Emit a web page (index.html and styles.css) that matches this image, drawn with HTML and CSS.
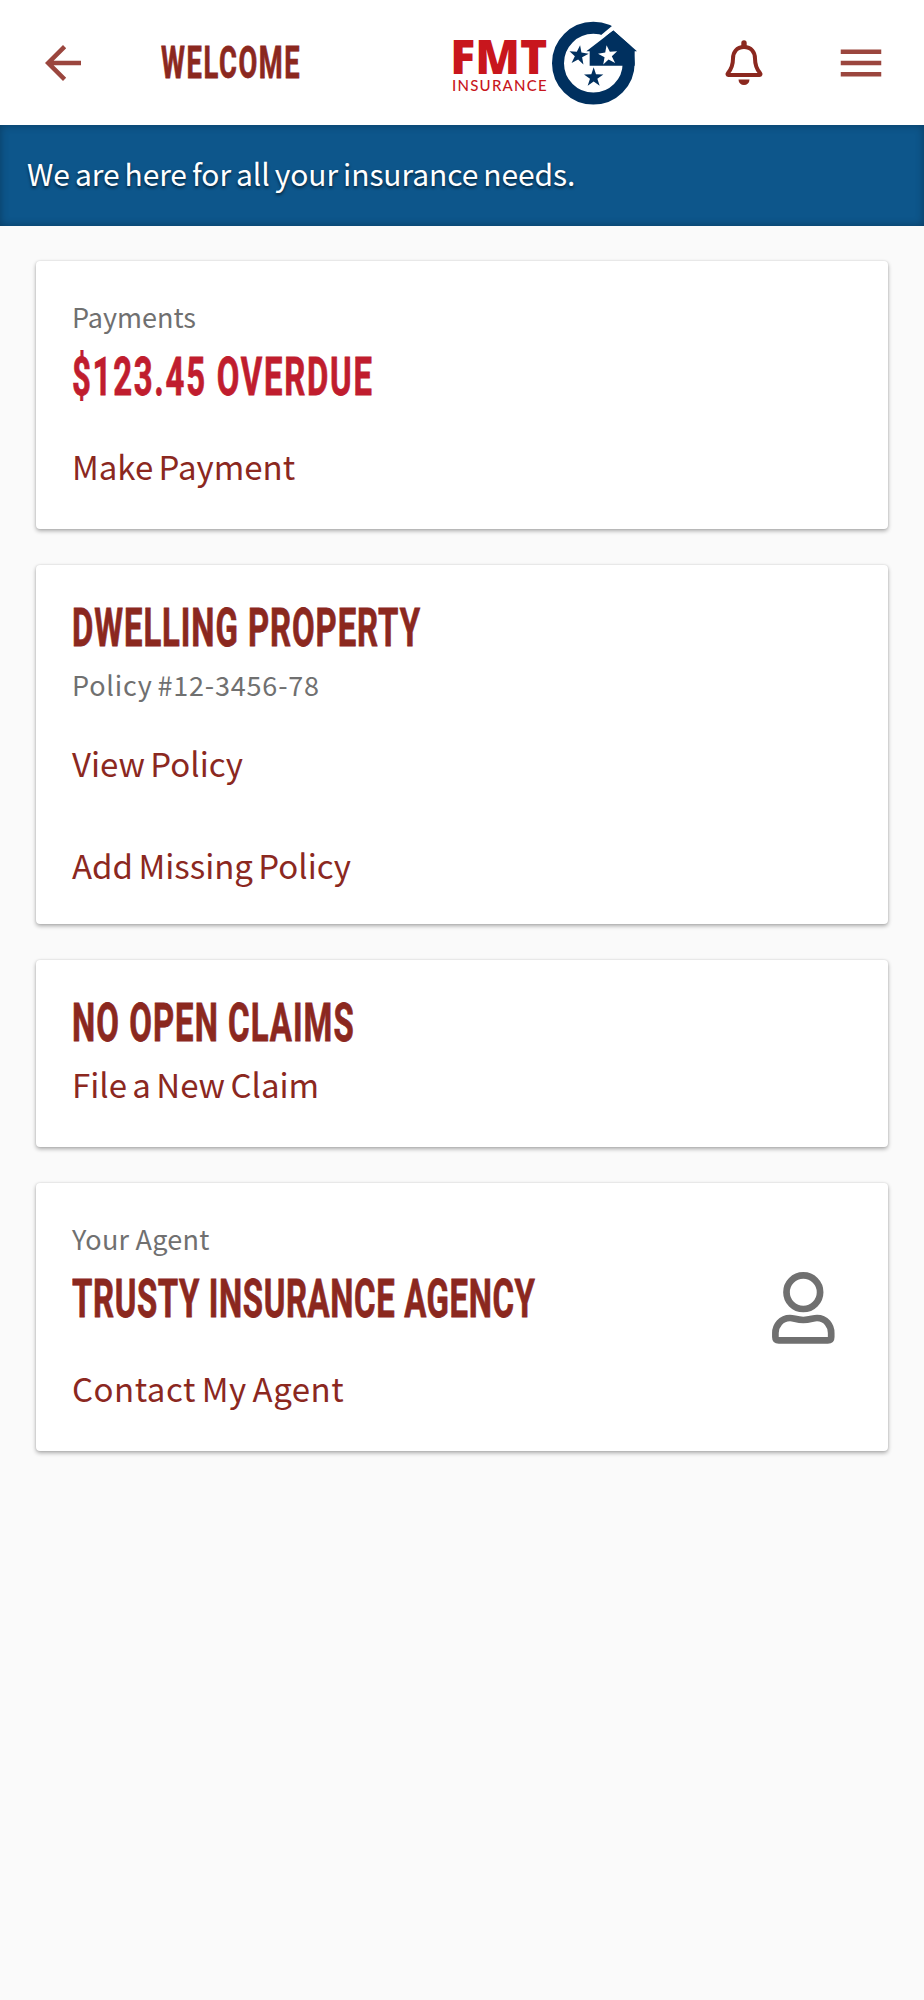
FILE: index.html
```html
<!DOCTYPE html>
<html lang="en">
<head>
<meta charset="utf-8">
<title>FMT Insurance</title>
<link rel="stylesheet" href="styles.css">
</head>
<body>
<header class="topbar">
  <svg class="icon back" viewBox="0 0 24 24"><path d="M20 11H7.83l5.59-5.59L12 4l-8 8 8 8 1.41-1.41L7.83 13H20v-2z"/></svg>
  <h1><span>WELCOME</span></h1>
  <svg class="logo" viewBox="60 50 570 275">
    <text class="fmt" x="61" y="219" textLength="291" lengthAdjust="spacingAndGlyphs">FMT</text>
    <text class="ins" x="66" y="272" textLength="284">INSURANCE</text>
    <circle class="ring" cx="490" cy="188" r="106"/>
    <path class="white" d="M500 115L545 77 600 40 660 152 620 152 550 90 496 132z"/>
    <path class="navy" d="M550 90L621 152H614V196H479V152H469z"/>
    <path class="navy" transform="translate(446 165) rotate(8)" d="M0-31L7-10 29-9 11 4 18 25 0 12-18 25-11 4-29-9-7-10z"/>
    <path class="navy" transform="translate(491 231)" d="M0-31L7-10 29-9 11 4 18 25 0 12-18 25-11 4-29-9-7-10z"/>
    <path class="white" transform="translate(534 165) rotate(-8)" d="M0-31L7-10 29-9 11 4 18 25 0 12-18 25-11 4-29-9-7-10z"/>
  </svg>
  <svg class="bell" viewBox="0 0 38 46"><path class="line" d="M19 7C11.500 7 8 12.500 8 18.500 8 26 6 29.500 3 33c-1 1.200-.5 2 .5 2h31c1 0 1.500-.8.500-2-3-3.500-5-7-5-14.500C30 12.500 26.500 7 19 7z"/><path d="M16.300 6V3a2.700 2.700 0 0 1 5.400 0v3zM13.500 39.500h11a5.500 5.500 0 0 1-11 0z"/></svg>
  <svg class="icon menu" viewBox="0 0 24 24"><path d="M3 18h18v-2H3v2zm0-5h18v-2H3v2zm0-7v2h18V6H3z"/></svg>
</header>

<div class="banner">We are here for all your insurance needs.</div>

<main>
  <section class="card payments">
    <p class="label">Payments</p>
    <h2 class="overdue"><span>$123.45 OVERDUE</span></h2>
    <a href="#">Make Payment</a>
  </section>

  <section class="card policy">
    <h2><span>DWELLING PROPERTY</span></h2>
    <p class="label">Policy #12-3456-78</p>
    <a href="#">View Policy</a>
    <a href="#">Add Missing Policy</a>
  </section>

  <section class="card claims">
    <h2><span>NO OPEN CLAIMS</span></h2>
    <a href="#">File a New Claim</a>
  </section>

  <section class="card agent">
    <div>
      <p class="label">Your Agent</p>
      <h2><span>TRUSTY INSURANCE AGENCY</span></h2>
      <a href="#">Contact My Agent</a>
    </div>
    <svg class="person" viewBox="0 0 63 72"><circle cx="31.300" cy="20.200" r="16.800"/><path d="M18 46C9 46 3.400 53.500 3.400 61v4q0 3.400 3.400 3.400h49q3.400 0 3.400-3.400v-4C59.200 53.500 54 46 45 46c-4 0-7 2-13.700 2S22 46 18 46z"/></svg>
  </section>
</main>
</body>
</html>
```
FILE: styles.css
```css
body {
  margin: 0;
  background: #fafafa;
  color: #8b281f;
  font-family: "Noto Sans CJK SC", "Noto Sans", sans-serif;
}

h1, h2, p { margin: 0; }

h1, h2 {
  font-family: Roboto, "Liberation Sans Narrow", sans-serif;
  font-weight: 700;
  white-space: nowrap;
}
/* squeeze the headings into a condensed face */
h1 span, h2 span {
  display: inline-block;
  transform: scaleX(.62);
  transform-origin: 0 50%;
  letter-spacing: 1.5px;
  -webkit-text-stroke: .8px;
}
h1 span { letter-spacing: 2.6px; }
.overdue span { letter-spacing: 2.8px; }
.claims span { letter-spacing: 1.7px; }
.agent span { letter-spacing: 1px; }

.topbar {
  display: flex;
  align-items: center;
  height: 125px;
  background: #fff;
}
.icon { width: 54px; height: 54px; fill: #8b281f; opacity: .86; }
.back { margin-left: 36px; }
h1 { width: 282px; margin: 1px 0 0 71px; font-size: 44px; line-height: 56px; }
.logo { width: 190px; height: 92px; margin-left: 7px; }
.fmt { font: 800 143px "Open Sans", sans-serif; fill: #c8161d; }
.ins { font: 500 45px Lato, sans-serif; fill: #c8161d; }
.ring { fill: #fff; stroke: #00305f; stroke-width: 36; }
.navy { fill: #00305f; }
.white { fill: #fff; }
.bell { width: 38px; height: 46px; margin-left: 85px; fill: #8b281f; }
.bell .line { fill: none; stroke: #8b281f; stroke-width: 4; }
.menu { margin-left: 71px; }

.banner {
  height: 101px;
  box-sizing: border-box;
  padding-left: 27px;
  background: #0d568b;
  color: #fff;
  font-size: 30px;
  line-height: 96px;
  letter-spacing: -.1px;
  word-spacing: -1.5px;
  text-shadow: 0 2px 3px rgba(0, 0, 0, .6);
  box-shadow: inset 0 0 9px rgba(0, 0, 0, .3);
}

main {
  display: flex;
  flex-direction: column;
  gap: 36px;
  padding: 35px 36px;
}

.card {
  box-sizing: border-box;
  padding: 38px 36px 0;
  background: #fff;
  border-radius: 4px;
  box-shadow: 0 2px 4px rgba(0, 0, 0, .32), 0 0 2px rgba(0, 0, 0, .12);
}
.card a {
  display: block;
  color: #8b281f;
  font-size: 33px;
  line-height: 44px;
  word-spacing: -2px;
  text-decoration: none;
}
.card h2 { font-size: 53px; line-height: 60px; }
.label { color: #707070; font-size: 27px; line-height: 36px; }
.card .label + h2 { margin: 12px 0 37px; }
.overdue { color: #c01d2e; }

.payments, .agent { height: 268px; }
.policy { height: 359px; padding-top: 33px; }
.policy .label { margin: 9px 0 38px; letter-spacing: .8px; word-spacing: -2px; }
.policy a + a { margin-top: 58px; }
.claims { height: 187px; padding-top: 33px; }
.claims a { margin-top: 9px; }

.agent { display: flex; justify-content: space-between; }
.agent > div { width: 500px; }
.agent .label { letter-spacing: .25px; }
.agent a { letter-spacing: .5px; }
.person {
  width: 63px;
  height: 72px;
  margin: 51px 17px 0 0;
  fill: none;
  stroke: #707070;
  stroke-width: 6.7;
}
```
